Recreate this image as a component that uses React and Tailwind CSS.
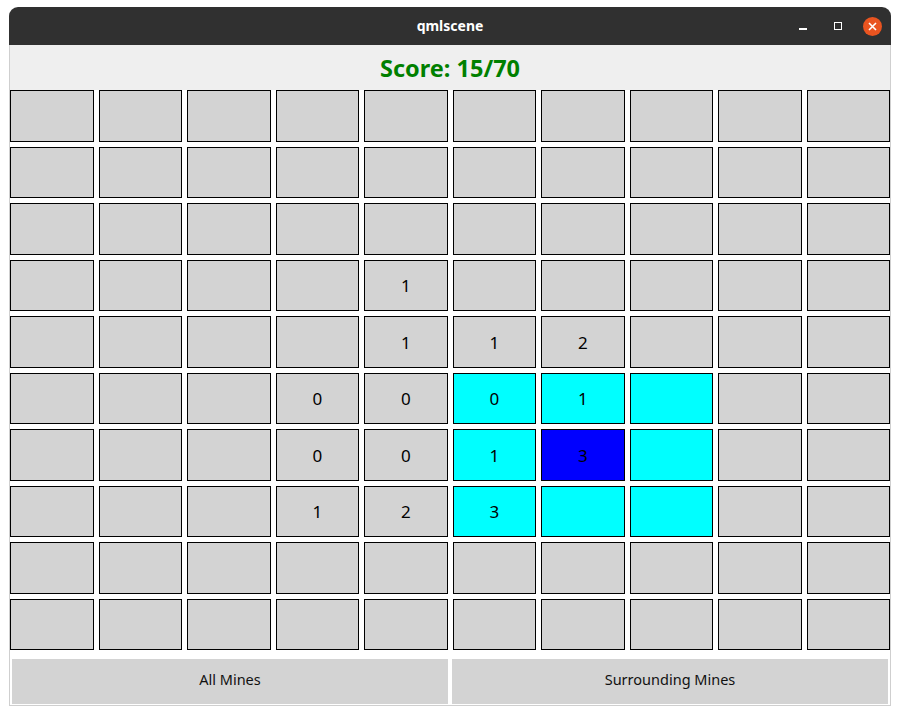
import React from "react";

const CELLS = {
  "3-4": { t: "1" },
  "4-4": { t: "1" },
  "4-5": { t: "1" },
  "4-6": { t: "2" },
  "5-3": { t: "0" },
  "5-4": { t: "0" },
  "5-5": { t: "0", c: "cyan" },
  "5-6": { t: "1", c: "cyan" },
  "5-7": { t: "", c: "cyan" },
  "6-3": { t: "0" },
  "6-4": { t: "0" },
  "6-5": { t: "1", c: "cyan" },
  "6-6": { t: "3", c: "blue" },
  "6-7": { t: "", c: "cyan" },
  "7-3": { t: "1" },
  "7-4": { t: "2" },
  "7-5": { t: "3", c: "cyan" },
  "7-6": { t: "", c: "cyan" },
  "7-7": { t: "", c: "cyan" },
};

function Cell({ r, c }) {
  const d = CELLS[`${r}-${c}`];
  const bg =
    d && d.c === "cyan"
      ? "bg-[#00ffff]"
      : d && d.c === "blue"
      ? "bg-[#0000ff]"
      : "bg-[#d3d3d3]";
  return (
    <div
      className={`${bg} border border-black flex items-center justify-center text-[17px] text-black`}
    >
      <span className="mt-[1px]">{d ? d.t : ""}</span>
    </div>
  );
}

export default function App() {
  const rows = Array.from({ length: 10 }, (_, i) => i);
  return (
    <div
      className="w-[900px] h-[715px] bg-white pt-[7px] pl-[9px]"
      style={{ fontFamily: '"Noto Sans", "Open Sans", sans-serif' }}
    >
      <div className="w-[882px] flex flex-col">
        <div className="h-[38px] bg-[#303030] rounded-t-[9px] relative flex items-center justify-center">
          <span className="text-white font-bold text-[14px] mt-[-1px]">qmlscene</span>
          <div className="absolute right-[1px] top-0 h-full flex items-center">
            <div className="w-[35px] flex items-center justify-center">
              <div className="w-[8px] h-[1.5px] bg-white mt-[6px]" />
            </div>
            <div className="w-[35px] flex items-center justify-center">
              <div className="w-[8px] h-[8px] border border-white" />
            </div>
            <div className="w-[35px] flex items-center justify-center">
              <div className="w-[19px] h-[19px] rounded-full bg-[#e95420] flex items-center justify-center">
                <svg width="9" height="9" viewBox="0 0 9 9">
                  <path d="M1 1L8 8M8 1L1 8" stroke="white" strokeWidth="1.6" />
                </svg>
              </div>
            </div>
          </div>
        </div>
        <div className="border-x border-b border-[#cfcfcf] h-[661px] flex flex-col bg-white">
          <div className="h-[45px] bg-[#efefef] flex items-center justify-center">
            <span className="text-[#008000] font-bold text-[23.5px] mt-[2px]">Score: 15/70</span>
          </div>
          <div className="grid grid-cols-10 gap-[5px] auto-rows-[51.5px]">
            {rows.map((r) =>
              rows.map((c) => <Cell key={`${r}-${c}`} r={r} c={c} />)
            )}
          </div>
          <div className="flex gap-[4px] px-[2px] mt-[8.5px]">
            <div className="flex-1 h-[45px] bg-[#d3d3d3] flex items-center justify-center text-[14.5px] text-[#111111]">
              <span className="mt-[-2px]">All Mines</span>
            </div>
            <div className="flex-1 h-[45px] bg-[#d3d3d3] flex items-center justify-center text-[14.5px] text-[#111111]">
              <span className="mt-[-2px]">Surrounding Mines</span>
            </div>
          </div>
        </div>
      </div>
    </div>
  );
}
